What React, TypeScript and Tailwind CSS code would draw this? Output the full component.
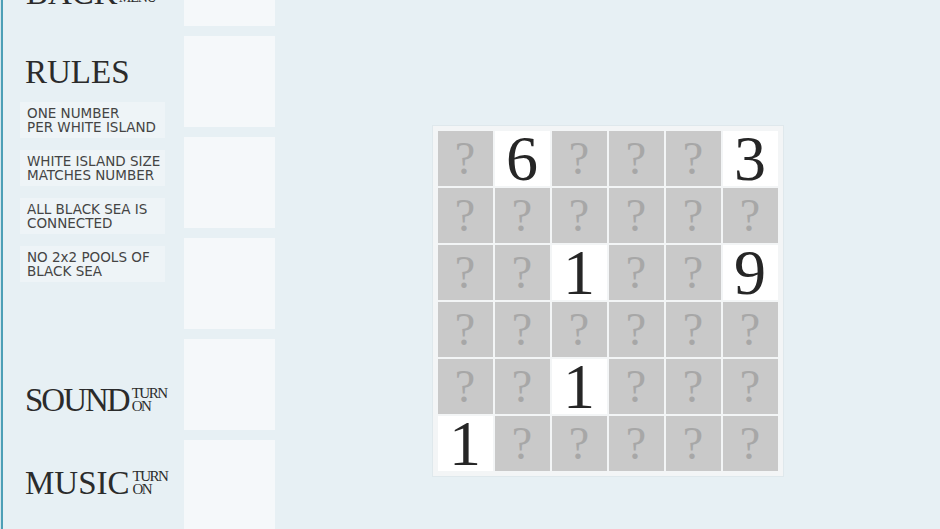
import React from "react";

const SERIF = "font-['Liberation_Serif','Times_New_Roman',serif]";
const SANS = "font-['DejaVu_Sans','Verdana',sans-serif]";

const RULES = [
  ["ONE NUMBER", "PER WHITE ISLAND"],
  ["WHITE ISLAND SIZE", "MATCHES NUMBER"],
  ["ALL BLACK SEA IS", "CONNECTED"],
  ["NO 2x2 POOLS OF", "BLACK SEA"],
];

// 0 = unknown cell, anything else is a clue
const BOARD = [
  [0, 6, 0, 0, 0, 3],
  [0, 0, 0, 0, 0, 0],
  [0, 0, 1, 0, 0, 9],
  [0, 0, 0, 0, 0, 0],
  [0, 0, 1, 0, 0, 0],
  [1, 0, 0, 0, 0, 0],
];

function Heading({ label, top, bottom, className = "" }: { label: string; top?: string; bottom?: string; className?: string }) {
  return (
    <div className={`flex h-[33px] items-start pl-[22px] text-[#2b2b2b] ${SERIF}`}>
      <span className={`text-[33px] leading-[33px] ${className}`}>{label}</span>
      {top && (
        <div className="ml-[3px] flex flex-col pt-[3px] text-[15px] leading-[13px] tracking-[-1.5px]">
          <span>{top}</span>
          <span>{bottom}</span>
        </div>
      )}
    </div>
  );
}

export default function App() {
  return (
    <div className="flex h-[529px] w-[940px] overflow-hidden bg-[#e7f0f4]">
      <div className="w-[1px] bg-[#d4e6ec]" />
      <div className="w-[2px] bg-[#4d9fb6]" />

      {/* sidebar */}
      <div className="flex w-[181px] flex-col">
        <div className="-mt-[23px]">
          <div className={`flex h-[33px] items-end pl-[23px] text-[#2b2b2b] ${SERIF}`}>
            <span className="text-[33px] leading-[33px]">BACK</span>
            <span className="mb-[6px] ml-[1px] text-[14px] leading-[13px] tracking-[-1px]">MENU</span>
          </div>
        </div>
        <div className="mt-[46px]">
          <Heading label="RULES" />
        </div>
        <div className="mt-[13px] flex flex-col gap-[12px] pl-[17px]">
          {RULES.map((r) => (
            <div key={r[0]} className={`h-[36px] w-[145px] bg-[#eef4f7] pl-[7px] pt-[5px] text-[13.5px] leading-[13.5px] text-[#444] ${SANS}`}>
              <div>{r[0]}</div>
              <div>{r[1]}</div>
            </div>
          ))}
        </div>
        <div className="mt-[102px]">
          <Heading label="SOUND" top="TURN" bottom="ON" className="tracking-[-2px]" />
        </div>
        <div className="mt-[50px]">
          <Heading label="MUSIC" top="TURN" bottom="ON" />
        </div>
      </div>

      {/* blank slots */}
      <div className="-mt-[65px] flex w-[91px] flex-col gap-[10px]">
        {[0, 1, 2, 3, 4, 5, 6].map((i) => (
          <div key={i} className="h-[91px] w-[91px] shrink-0 bg-[#f5f8fa]" />
        ))}
      </div>

      {/* board */}
      <div className="flex flex-1 justify-center pt-[126px]">
        <div className="grid h-[350px] w-[350px] grid-cols-6 gap-[2px] bg-[#f3f5f6] p-[5px] shadow-[0_0_0_1px_#dfe8ec]">
          {BOARD.flat().map((v, i) =>
            v ? (
              <div key={i} className={`flex h-[55px] w-[55px] items-center justify-center bg-white text-[64px] leading-none text-[#262626] ${SERIF}`}>
                {v}
              </div>
            ) : (
              <div key={i} className={`flex h-[55px] w-[55px] items-center justify-center bg-[#c9c9c9] text-[46px] leading-none text-[#a7a7a7] ${SERIF}`}>
                ?
              </div>
            )
          )}
        </div>
      </div>
    </div>
  );
}
